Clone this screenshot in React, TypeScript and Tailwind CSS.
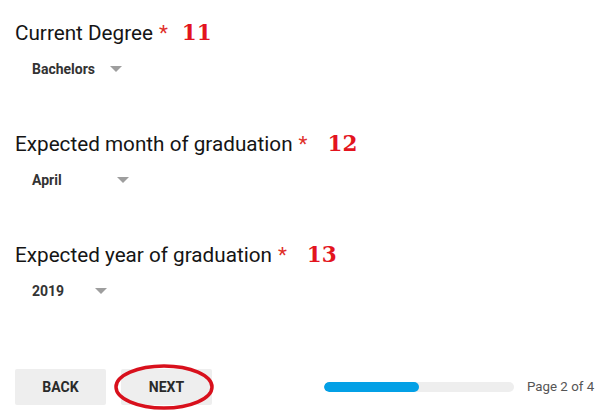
import React from "react";

const Tri = () => (
  <svg width="12" height="6" viewBox="0 0 12 6" className="block">
    <path d="M0 0 L12 0 L6 6 Z" fill="#9e9e9e" />
  </svg>
);

function Section({
  title,
  num,
  numGap,
  value,
  textW,
}: {
  title: string;
  num: string;
  numGap: number;
  value: string;
  textW: number;
}) {
  return (
    <div className="flex flex-col h-[111px]">
      <div className="flex items-baseline h-[24px] leading-[24px]">
        <span className="text-[20.7px] text-[#151515]" style={{ fontFamily: "Roboto, sans-serif" }}>
          {title}
        </span>
        <span className="ml-[6px] text-[20.7px] text-[#e0302a]" style={{ fontFamily: "Roboto, sans-serif" }}>
          *
        </span>
        <span
          className="font-bold text-[21.5px] text-[#e3141e]"
          style={{ fontFamily: '"DejaVu Serif", serif', marginLeft: numGap }}
        >
          {num}
        </span>
      </div>
      <div className="mt-[16px] ml-[17px] flex items-center h-[16px]">
        <span
          className="text-[14px] font-bold leading-[16px] text-[#333]"
          style={{ fontFamily: "Roboto, sans-serif", width: textW }}
        >
          {value}
        </span>
        <Tri />
      </div>
    </div>
  );
}

export default function App() {
  return (
    <div className="w-[611px] h-[413px] bg-white overflow-hidden pl-[15px] pt-[21px]" style={{ fontFamily: "Roboto, sans-serif" }}>
      <Section title="Current Degree" num="11" numGap={14} value="Bachelors" textW={78} />
      <Section title="Expected month of graduation" num="12" numGap={20} value="April" textW={85} />
      <Section title="Expected year of graduation" num="13" numGap={20} value="2019" textW={63} />
      <div className="mt-[15px] flex items-center h-[36px]">
        <button className="w-[91px] h-[36px] bg-[#eeeeee] rounded-[2px] text-[14px] font-bold text-[#2a2a2a]">
          BACK
        </button>
        <div className="relative ml-[15px]">
          <button className="w-[91px] h-[36px] bg-[#eeeeee] rounded-[2px] text-[14px] font-bold text-[#2a2a2a]">
            NEXT
          </button>
          <svg
            className="absolute left-[-7px] top-[-5px] pointer-events-none"
            width="102"
            height="46"
            viewBox="0 0 102 46"
          >
            <ellipse cx="50" cy="23" rx="48" ry="21" fill="none" stroke="#d8101c" strokeWidth="3.5" />
          </svg>
        </div>
        <div className="ml-[112px] w-[190px] h-[10px] rounded-full bg-[#eeeeee] overflow-hidden">
          <div className="h-full w-[95px] rounded-full bg-[#03a0e6]" />
        </div>
        <span className="ml-[13px] text-[13.3px] text-[#555]">Page 2 of 4</span>
      </div>
    </div>
  );
}
